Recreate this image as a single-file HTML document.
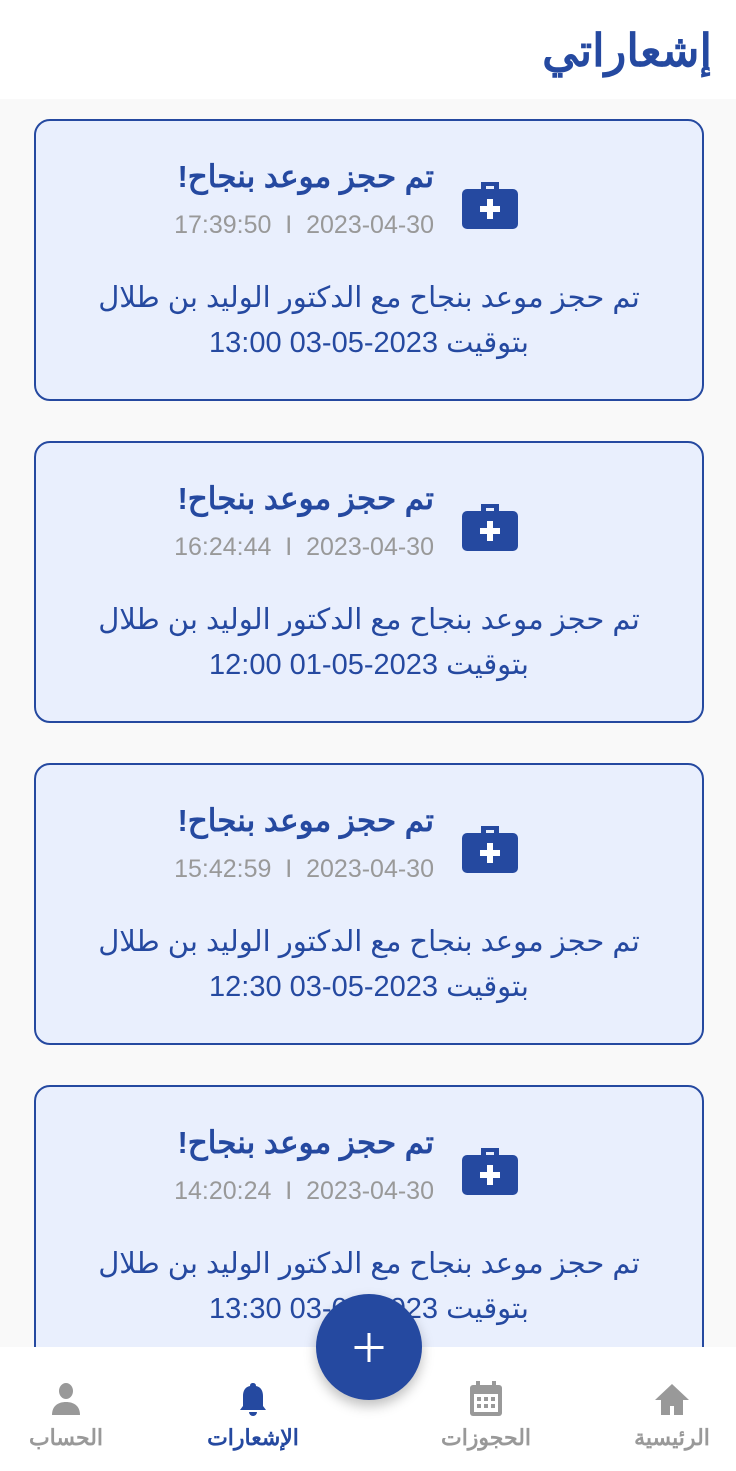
<!DOCTYPE html>
<html><head><meta charset="utf-8"><style>
*{margin:0;padding:0;box-sizing:border-box}
body{width:736px;height:1471px;overflow:hidden;background:#f9f9f9;font-family:"Liberation Sans","Noto Sans CJK SC",sans-serif;position:relative}
.hdr{position:absolute;left:0;top:0;width:736px;height:99px;background:#fff}
.hdr h1{position:absolute;right:24px;top:24px;font-size:45px;font-weight:bold;color:#2549a0;direction:rtl}
.card{position:absolute;left:34px;width:670px;height:282px;background:#e9effd;border:2px solid #2549a0;border-radius:16px}
.t{position:absolute;right:268px;top:38px;font-size:31px;font-weight:bold;color:#2549a0;direction:rtl;white-space:nowrap}
.d{position:absolute;right:268px;top:90px;font-size:25px;color:#999;white-space:nowrap}
.b{position:absolute;left:0;right:0;top:155px;text-align:center;font-size:29px;line-height:45px;color:#2549a0;direction:rtl}
.ic{position:absolute;left:425px;top:57px}
.nav{position:absolute;left:0;top:1347px;width:736px;height:124px;background:#fff}
.ni{position:absolute;top:34px;width:120px;text-align:center;font-size:22px;font-weight:bold;color:#999}
.ni svg{display:block;margin:0 auto 8px}
.fab{position:absolute;left:316px;top:1294px;width:106px;height:106px;border-radius:50%;background:#2549a0;box-shadow:0 6px 12px rgba(0,0,0,.25)}
</style></head><body>
<div class="hdr"><h1>إشعاراتي</h1></div>

<div class="card" style="top:119px"><svg class="ic" width="58" height="52" viewBox="0 0 58 52"><path d="M20 4h18v8h-5V8h-8v4h-5z" fill="#2549a0"/><rect x="1" y="11" width="56" height="40" rx="5" fill="#2549a0"/><path d="M26 21h6v7h7v6h-7v7h-6v-7h-7v-6h7z" fill="#fff"/></svg><div class="t">تم حجز موعد بنجاح!</div><div class="d">17:39:50 &nbsp;I&nbsp; 2023-04-30</div><div class="b">تم حجز موعد بنجاح مع الدكتور الوليد بن طلال<br>بتوقيت 2023-05-03 13:00</div></div>

<div class="card" style="top:441px"><svg class="ic" width="58" height="52" viewBox="0 0 58 52"><path d="M20 4h18v8h-5V8h-8v4h-5z" fill="#2549a0"/><rect x="1" y="11" width="56" height="40" rx="5" fill="#2549a0"/><path d="M26 21h6v7h7v6h-7v7h-6v-7h-7v-6h7z" fill="#fff"/></svg><div class="t">تم حجز موعد بنجاح!</div><div class="d">16:24:44 &nbsp;I&nbsp; 2023-04-30</div><div class="b">تم حجز موعد بنجاح مع الدكتور الوليد بن طلال<br>بتوقيت 2023-05-01 12:00</div></div>

<div class="card" style="top:763px"><svg class="ic" width="58" height="52" viewBox="0 0 58 52"><path d="M20 4h18v8h-5V8h-8v4h-5z" fill="#2549a0"/><rect x="1" y="11" width="56" height="40" rx="5" fill="#2549a0"/><path d="M26 21h6v7h7v6h-7v7h-6v-7h-7v-6h7z" fill="#fff"/></svg><div class="t">تم حجز موعد بنجاح!</div><div class="d">15:42:59 &nbsp;I&nbsp; 2023-04-30</div><div class="b">تم حجز موعد بنجاح مع الدكتور الوليد بن طلال<br>بتوقيت 2023-05-03 12:30</div></div>

<div class="card" style="top:1085px"><svg class="ic" width="58" height="52" viewBox="0 0 58 52"><path d="M20 4h18v8h-5V8h-8v4h-5z" fill="#2549a0"/><rect x="1" y="11" width="56" height="40" rx="5" fill="#2549a0"/><path d="M26 21h6v7h7v6h-7v7h-6v-7h-7v-6h7z" fill="#fff"/></svg><div class="t">تم حجز موعد بنجاح!</div><div class="d">14:20:24 &nbsp;I&nbsp; 2023-04-30</div><div class="b">تم حجز موعد بنجاح مع الدكتور الوليد بن طلال<br>بتوقيت 2023-05-03 13:30</div></div>

<div class="nav">
<div class="ni" style="left:612px"><svg width="38" height="36" viewBox="0 0 38 36"><path d="M19 3L2 19h6v15h9v-9h4v9h9V19h6z" fill="#999"/></svg>الرئيسية</div>
<div class="ni" style="left:426px"><svg width="38" height="36" viewBox="0 0 38 36"><rect x="3" y="4" width="32" height="31" rx="3" fill="#999"/><rect x="9" y="0" width="4" height="8" fill="#999"/><rect x="25" y="0" width="4" height="8" fill="#999"/><rect x="7" y="13" width="24" height="18" fill="#fff"/><g fill="#999"><rect x="10" y="16" width="4" height="4"/><rect x="17" y="16" width="4" height="4"/><rect x="24" y="16" width="4" height="4"/><rect x="10" y="23" width="4" height="4"/><rect x="17" y="23" width="4" height="4"/><rect x="24" y="23" width="4" height="4"/></g></svg>الحجوزات</div>
<div class="ni" style="left:193px;color:#2549a0"><svg width="38" height="36" viewBox="0 0 38 36"><path d="M19 2c2 0 3 1 3 3 5 1 7 5 7 10v10l3 4H6l3-4V15c0-5 2-9 7-10 0-2 1-3 3-3z" fill="#2549a0"/><path d="M15 31h8a4 4 0 0 1-8 0z" fill="#2549a0"/></svg>الإشعارات</div>
<div class="ni" style="left:6px"><svg width="38" height="36" viewBox="0 0 38 36"><ellipse cx="19" cy="10" rx="7" ry="8" fill="#999"/><path d="M5 34c0-9 6-13 14-13s14 4 14 13z" fill="#999"/></svg>الحساب</div>
</div>
<div class="fab"><svg width="106" height="106" viewBox="0 0 106 106"><path d="M51.5 39h3v13h13v3h-13v13h-3V55h-13v-3h13z" fill="#fff"/></svg></div>
</body></html>
